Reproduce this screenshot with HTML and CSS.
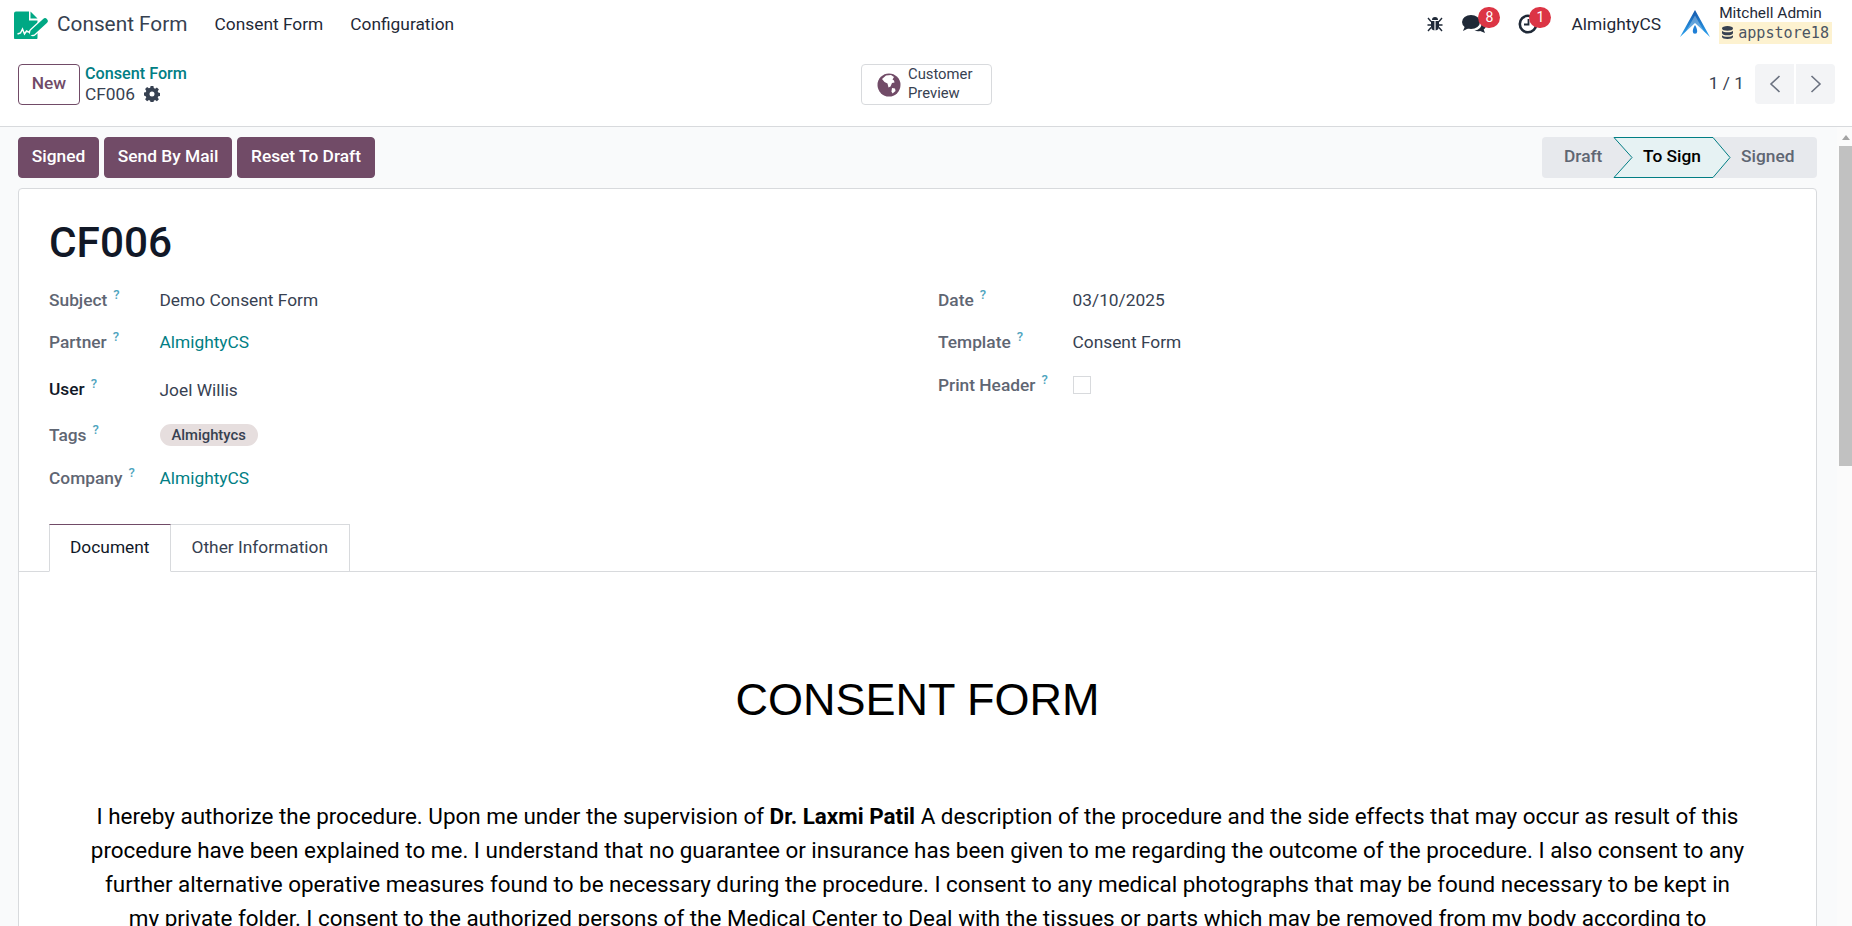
FILE: index.html
```html
<!DOCTYPE html>
<html lang="en">
<head>
    <meta charset="UTF-8">
    <title>Consent Form</title>
    <link rel="stylesheet" href="styles.css">
</head>
<body>
    <header class="navbar">
        <svg class="app-logo" viewBox="0 0 34 30" width="34" height="30">
            <path d="M2 2.500h13l8.500 8.500v17.500a2 2 0 0 1-2 2H2a2 2 0 0 1-2-2V4.500a2 2 0 0 1 2-2z" fill="#00a884"/>
            <path d="M15 1.500l10 10h-10z" fill="#fff"/>
            <path d="M16.500 2.500l7 7h-7z" fill="#00a884"/>
            <path d="M3.500 25l3-1 2-4 2 5 2-3 2 1 2 0" fill="none" stroke="#fff" stroke-width="1.500"/>
            <path d="M19 23L31 12" stroke="#fff" stroke-width="8" stroke-linecap="round"/>
            <path d="M19.500 22.500L31 12" stroke="#00a884" stroke-width="5.500" stroke-linecap="round"/>
            <path d="M15 27l2-6 4 4z" fill="#00a884"/>
        </svg>
        <span class="brand">Consent Form</span>
        <nav class="menu">
            <a>Consent Form</a>
            <a>Configuration</a>
        </nav>
        <div class="systray">
            <svg class="bug" viewBox="0 0 16 16" width="16" height="16">
                <path d="M5 4a3 3 0 0 1 6 0z" fill="#1f2937"/>
                <path d="M4 5h3.400v9.500A4 4 0 0 1 4 11zM8.600 5H12v6a4 4 0 0 1-3.400 3.500z" fill="#1f2937"/>
                <path d="M1 2l3 3.500M15 2l-3 3.500M0.500 9h3.500M15.500 9H12M1 15l3-3.500M15 15l-3-3.500" stroke="#1f2937" stroke-width="1.400" fill="none"/>
            </svg>
            <span class="tray-item chat">
                <svg viewBox="0 0 24 20" width="24" height="20">
                    <ellipse cx="9" cy="8" rx="9" ry="7" fill="#1f2937"/>
                    <path d="M3 12l-2 5 6-3z" fill="#1f2937"/>
                    <path d="M19.500 5.500c2.700 1.200 4.500 3.300 4.500 5.700 0 1.700-.9 3.200-2.300 4.400l1.300 3.400-4.800-2.100c-1.800.4-3.900.3-5.700-.4 4.600-.5 8.300-3.500 7-11z" fill="#1f2937"/>
                </svg>
                <span class="badge">8</span>
            </span>
            <span class="tray-item clock">
                <svg viewBox="0 0 20 20" width="20" height="20">
                    <circle cx="10" cy="10" r="8.200" fill="none" stroke="#1f2937" stroke-width="2.600"/>
                    <path d="M10.500 5v5.500H6" fill="none" stroke="#1f2937" stroke-width="1.800"/>
                </svg>
                <span class="badge">1</span>
            </span>
            <span class="company">AlmightyCS</span>
            <svg class="avatar" viewBox="0 0 30 28" width="30" height="28">
                <defs>
                    <linearGradient id="avatar-blue" x1="0" y1="0" x2="0" y2="1">
                        <stop offset="0" stop-color="#1557ab"/>
                        <stop offset="1" stop-color="#2aa3f0"/>
                    </linearGradient>
                </defs>
                <path d="M15 0L30 27 15 13 0 27z" fill="url(#avatar-blue)"/>
                <path d="M15 5.500L25.500 24 15 14.500 4.500 24z" fill="#fff" opacity=".3"/>
                <path d="M15 15c1.800 3 2.200 5 2.200 6.500a2.200 2.200 0 0 1-4.400 0c0-1.500.4-3.500 2.200-6.500z" fill="#1f7fd6"/>
            </svg>
            <div class="user-info">
                <span class="user-name">Mitchell Admin</span>
                <span class="db-name">
                    <svg viewBox="0 0 12 14" width="11" height="13">
                        <path d="M0 2.500C0 1 2.700 0 6 0s6 1 6 2.500S9.300 5 6 5 0 4 0 2.500zM0 5c1 1.200 3.300 1.700 6 1.700S11 6.200 12 5v2.500C12 9 9.300 10 6 10S0 9 0 7.500zM0 10c1 1.200 3.300 1.700 6 1.700s5-.5 6-1.700v1.500C12 13 9.300 14 6 14s-6-1-6-2.500z" fill="#374151"/>
                    </svg>
                    <code>appstore18</code>
                </span>
            </div>
        </div>
    </header>

    <section class="control-panel">
        <div class="cp-left">
            <button class="btn-new">New</button>
            <div class="breadcrumb">
                <a class="crumb-link">Consent Form</a>
                <span class="crumb-current">CF006
                    <svg viewBox="0 0 16 16" width="16" height="16">
                        <path fill="#374151" fill-rule="evenodd" d="M6.600 0h2.800l.4 2.100 1.300.6 1.800-1.200 2 2-1.200 1.800.6 1.300 2.100.4v2.800l-2.100.4-.6 1.300 1.200 1.800-2 2-1.800-1.200-1.300.6-.4 2.100H6.600l-.4-2.100-1.300-.6-1.800 1.200-2-2 1.200-1.800-.6-1.300L-.4 9.400V6.600l2.100-.4.6-1.300-1.200-1.800 2-2 1.800 1.200 1.300-.6zM8 5.500a2.500 2.500 0 1 0 0 5 2.500 2.500 0 0 0 0-5z"/>
                    </svg>
                </span>
            </div>
        </div>
        <button class="btn-preview">
            <svg viewBox="0 0 24 24" width="24" height="24">
                <circle cx="12" cy="12" r="11.500" fill="#714b67"/>
                <path d="M9 2.500l5-.5 3 2-1.500 2.500 1.500 1 .5 2-2.500.5-1.500 3.500-2 1-1-4-3-1.500L5 6z" fill="#fff"/>
                <path d="M15 15l3 .5.500 2.500-3 2.500-1-2z" fill="#fff"/>
            </svg>
            <span class="preview-label">Customer<br>Preview</span>
        </button>
        <div class="pager">
            <span class="pager-count">1 / 1</span>
            <div class="pager-btns">
                <button class="pager-btn">
                    <svg viewBox="0 0 12 20" width="12" height="20"><path d="M10.500 2L2 10l8.500 8" fill="none" stroke="#6b7280" stroke-width="1.600"/></svg>
                </button>
                <button class="pager-btn">
                    <svg viewBox="0 0 12 20" width="12" height="20"><path d="M1.500 2L10 10l-8.500 8" fill="none" stroke="#6b7280" stroke-width="1.600"/></svg>
                </button>
            </div>
        </div>
    </section>

    <div class="page-body">
        <main class="content">
            <div class="form-actions">
                <div class="action-btns">
                    <button class="btn-primary">Signed</button>
                    <button class="btn-primary">Send By Mail</button>
                    <button class="btn-primary">Reset To Draft</button>
                </div>
                <div class="statusbar">
                    <span class="step step-draft">Draft</span>
                    <span class="step step-current">
                        <svg class="chevron" viewBox="0 0 118 41" width="118" height="41" preserveAspectRatio="none">
                            <path d="M1 .5H100L117 20.500 100 40.500H1L19 20.500z" fill="#e6f2f3" stroke="#017e84"/>
                        </svg>
                        <span class="step-label">To Sign</span>
                    </span>
                    <span class="step step-signed">Signed</span>
                </div>
            </div>

            <article class="sheet">
                <h1 class="record-title">CF006</h1>
                <div class="groups">
                    <div class="field-group left-group">
                        <div class="field"><label>Subject<sup>?</sup></label><span>Demo Consent Form</span></div>
                        <div class="field"><label>Partner<sup>?</sup></label><a>AlmightyCS</a></div>
                        <div class="field"><label class="required">User<sup>?</sup></label><span>Joel Willis</span></div>
                        <div class="field"><label>Tags<sup>?</sup></label><span class="tag">Almightycs</span></div>
                        <div class="field"><label>Company<sup>?</sup></label><a>AlmightyCS</a></div>
                    </div>
                    <div class="field-group right-group">
                        <div class="field"><label>Date<sup>?</sup></label><span>03/10/2025</span></div>
                        <div class="field"><label>Template<sup>?</sup></label><span>Consent Form</span></div>
                        <div class="field"><label>Print Header<sup>?</sup></label><span class="checkbox"></span></div>
                    </div>
                </div>

                <div class="tabs">
                    <a class="tab active">Document</a>
                    <a class="tab tab-other">Other Information</a>
                </div>

                <div class="document">
                    <h2>CONSENT FORM</h2>
                    <p>I hereby authorize the procedure. Upon me under the supervision of <b>Dr. Laxmi Patil</b> A description of the procedure and the side effects that may occur as result of this procedure have been explained to me. I understand that no guarantee or insurance has been given to me regarding the outcome of the procedure. I also consent to any further alternative operative measures found to be necessary during the procedure. I consent to any medical photographs that may be found necessary to be kept in my private folder. I consent to the authorized persons of the Medical Center to Deal with the tissues or parts which may be removed from my body according to</p>
                </div>
            </article>
        </main>
        <div class="scrollbar">
            <span class="scroll-arrow"></span>
            <span class="scroll-thumb"></span>
        </div>
    </div>
</body>
</html>
```

FILE: styles.css
```css
/* Page frame */
* {
    box-sizing: border-box;
}

html, body {
    height: 100%;
}

body {
    margin: 0;
    height: 100vh;
    overflow: hidden;
    display: flex;
    flex-direction: column;
    background: #fff;
    color: #374151;
    font-family: Roboto, "Liberation Sans", sans-serif;
    font-size: 17.330px;
}

button {
    font-family: inherit;
    cursor: pointer;
}

/* Top navbar */
.navbar {
    flex: none;
    height: 47px;
    display: flex;
    align-items: center;
    padding-left: 14px;
}

.app-logo {
    flex: none;
}

.brand {
    margin-left: 9px;
    font-size: 20.800px;
    color: #374151;
}

.menu {
    display: flex;
    gap: 27px;
    margin-left: 27px;
    color: #1f2937;
}

.systray {
    margin-left: auto;
    display: flex;
    align-items: center;
    padding-right: 20px;
    color: #1f2937;
}

.bug {
    margin-right: 19px;
}

.tray-item {
    position: relative;
    display: flex;
}

.chat {
    margin-right: 32px;
}

.clock {
    margin-right: 33px;
}

.badge {
    position: absolute;
    top: -7px;
    left: 16px;
    min-width: 22px;
    height: 21px;
    border-radius: 11px;
    background: #dc3545;
    color: #fff;
    font-size: 14px;
    text-align: center;
    line-height: 21px;
}

.clock .badge {
    left: 11px;
}

.company {
    margin-right: 19px;
}

.avatar {
    margin-right: 9px;
}

.user-info {
    display: flex;
    flex-direction: column;
    font-size: 15.400px;
    line-height: 18px;
}

.db-name {
    display: flex;
    align-items: center;
    gap: 5px;
    padding: 0 3px;
    height: 22px;
    background: #fdf2d0;
}

.db-name code {
    font-family: "DejaVu Sans Mono", monospace;
    font-size: 15.100px;
    color: #4b5563;
}

/* Control panel */
.control-panel {
    flex: none;
    position: relative;
    height: 80px;
    display: flex;
    justify-content: space-between;
    align-items: flex-start;
    padding: 17px 17px 0 18px;
    border-bottom: 1px solid #d8dadd;
}

.cp-left {
    display: flex;
    gap: 5px;
}

.btn-new {
    width: 62px;
    height: 41px;
    padding: 0 0 3px;
    background: #fff;
    border: 1px solid #714b67;
    border-radius: 4px;
    color: #714b67;
    font-size: 17.330px;
    font-weight: 500;
}

.breadcrumb {
    display: flex;
    flex-direction: column;
    line-height: 20px;
}

.crumb-link {
    font-size: 16.200px;
    color: #017e84;
    font-weight: 500;
}

.crumb-current {
    display: flex;
    align-items: center;
    gap: 9px;
}

.btn-preview {
    position: absolute;
    left: 861px;
    top: 17px;
    width: 131px;
    height: 41px;
    display: flex;
    align-items: center;
    gap: 7px;
    padding: 0 0 0 15px;
    background: #fff;
    border: 1px solid #d8dadd;
    border-radius: 4px;
    color: #374151;
    font-size: 14.800px;
    line-height: 19px;
    text-align: left;
}

.preview-label {
    margin-bottom: 2px;
}

.pager {
    display: flex;
    align-items: center;
    gap: 11px;
}

.pager-count {
    margin-bottom: 2px;
}

.pager-btns {
    display: flex;
    gap: 2px;
}

.pager-btn {
    width: 39px;
    height: 40px;
    display: flex;
    align-items: center;
    justify-content: center;
    padding: 0;
    background: #f3f4f6;
    border: 0;
    border-radius: 4px 0 0 4px;
}

.pager-btn + .pager-btn {
    border-radius: 0 4px 4px 0;
}

/* Scrolling body */
.page-body {
    flex: 1;
    min-height: 0;
    display: flex;
    background: #f9fafb;
    overflow: hidden;
}

.content {
    flex: 1;
    min-width: 0;
    padding: 10px 20px 0 18px;
}

.form-actions {
    display: flex;
    justify-content: space-between;
    margin-bottom: 10px;
}

.action-btns {
    display: flex;
    gap: 5px;
}

.btn-primary {
    height: 41px;
    padding: 0 12.800px 3px;
    background: #714b67;
    border: 1px solid #714b67;
    border-radius: 4px;
    color: #fff;
    font-size: 17.330px;
    font-weight: 500;
}

.statusbar {
    width: 275px;
    height: 41px;
    display: flex;
    background: #e7e9ed;
    border-radius: 4px;
    color: #5f6673;
    font-weight: 500;
    line-height: 39px;
}

.step-draft {
    width: 71px;
    padding-left: 22px;
}

.step-current {
    position: relative;
    width: 100px;
    flex: none;
    color: #000;
}

.chevron {
    position: absolute;
    left: 0;
    top: 0;
}

.step-label {
    position: relative;
    margin-left: 30px;
}

.step-signed {
    padding-left: 28px;
}

/* Form sheet */
.sheet {
    background: #fff;
    border: 1px solid #d8dadd;
    border-radius: 4px 4px 0 0;
    padding-top: 29px;
}

.record-title {
    margin: 0 0 11px 30px;
    font-size: 42.300px;
    font-weight: 500;
    line-height: 50px;
    color: #111827;
}

.groups {
    display: flex;
    padding-left: 30px;
}

.field-group {
    display: grid;
    align-content: start;
}

.left-group {
    width: 889px;
    grid-template-rows: 42px 42px 54px 36px 50px;
}

.right-group {
    grid-template-rows: 42px 42px 44px;
}

.field {
    display: grid;
    align-items: center;
    grid-template-columns: 110.500px 1fr;
}

.right-group .field {
    grid-template-columns: 134.500px 1fr;
}

.field label {
    margin-bottom: 1px;
    color: #5f6673;
    font-weight: 500;
}

.field label.required {
    margin-bottom: 3px;
    color: #111827;
}

.field sup {
    margin-left: 6px;
    line-height: 0;
    color: #0180a5;
    opacity: .7;
    font-size: 13px;
}

.field a {
    color: #017e84;
}

.tag {
    justify-self: start;
    padding: 0 12px;
    height: 22px;
    border-radius: 11px;
    background: #e6dede;
    font-size: 14.800px;
    font-weight: 500;
    line-height: 22px;
}

.checkbox {
    width: 18px;
    height: 18px;
    border: 1px solid #d8dadd;
}

/* Tabs */
.tabs {
    display: flex;
    margin-top: 21px;
    padding-left: 30px;
    border-bottom: 1px solid #d8dadd;
    height: 48px;
}

.tab {
    height: 48px;
    padding: 0 20px;
    line-height: 44px;
    border: 1px solid #d8dadd;
    border-left-width: 0;
}

.tab-other {
    padding: 0 21px;
}

.tab.active {
    border-left-width: 1px;
    border-top-color: #714b67;
    border-bottom-color: #fff;
    color: #111827;
}

/* Document body */
.document {
    padding: 102px 69px 0;
    text-align: center;
    color: #000;
}

.document h2 {
    margin: 0 0 73px;
    font-family: "Liberation Sans", Arial, sans-serif;
    font-size: 45px;
    font-weight: 400;
    line-height: 52px;
}

.document p {
    margin: 0;
    font-size: 22.450px;
    line-height: 34px;
}

/* Fake page scrollbar */
.scrollbar {
    flex: none;
    width: 15px;
    padding-left: 2px;
    background: #fbfbfb;
    display: flex;
    flex-direction: column;
    align-items: center;
}

.scroll-arrow {
    width: 0;
    height: 0;
    margin: 8px 0 6px;
    border: 4px solid transparent;
    border-top: 0;
    border-bottom: 5px solid #a3a3a3;
}

.scroll-thumb {
    width: 100%;
    height: 320px;
    background: #c1c1c1;
}
```
